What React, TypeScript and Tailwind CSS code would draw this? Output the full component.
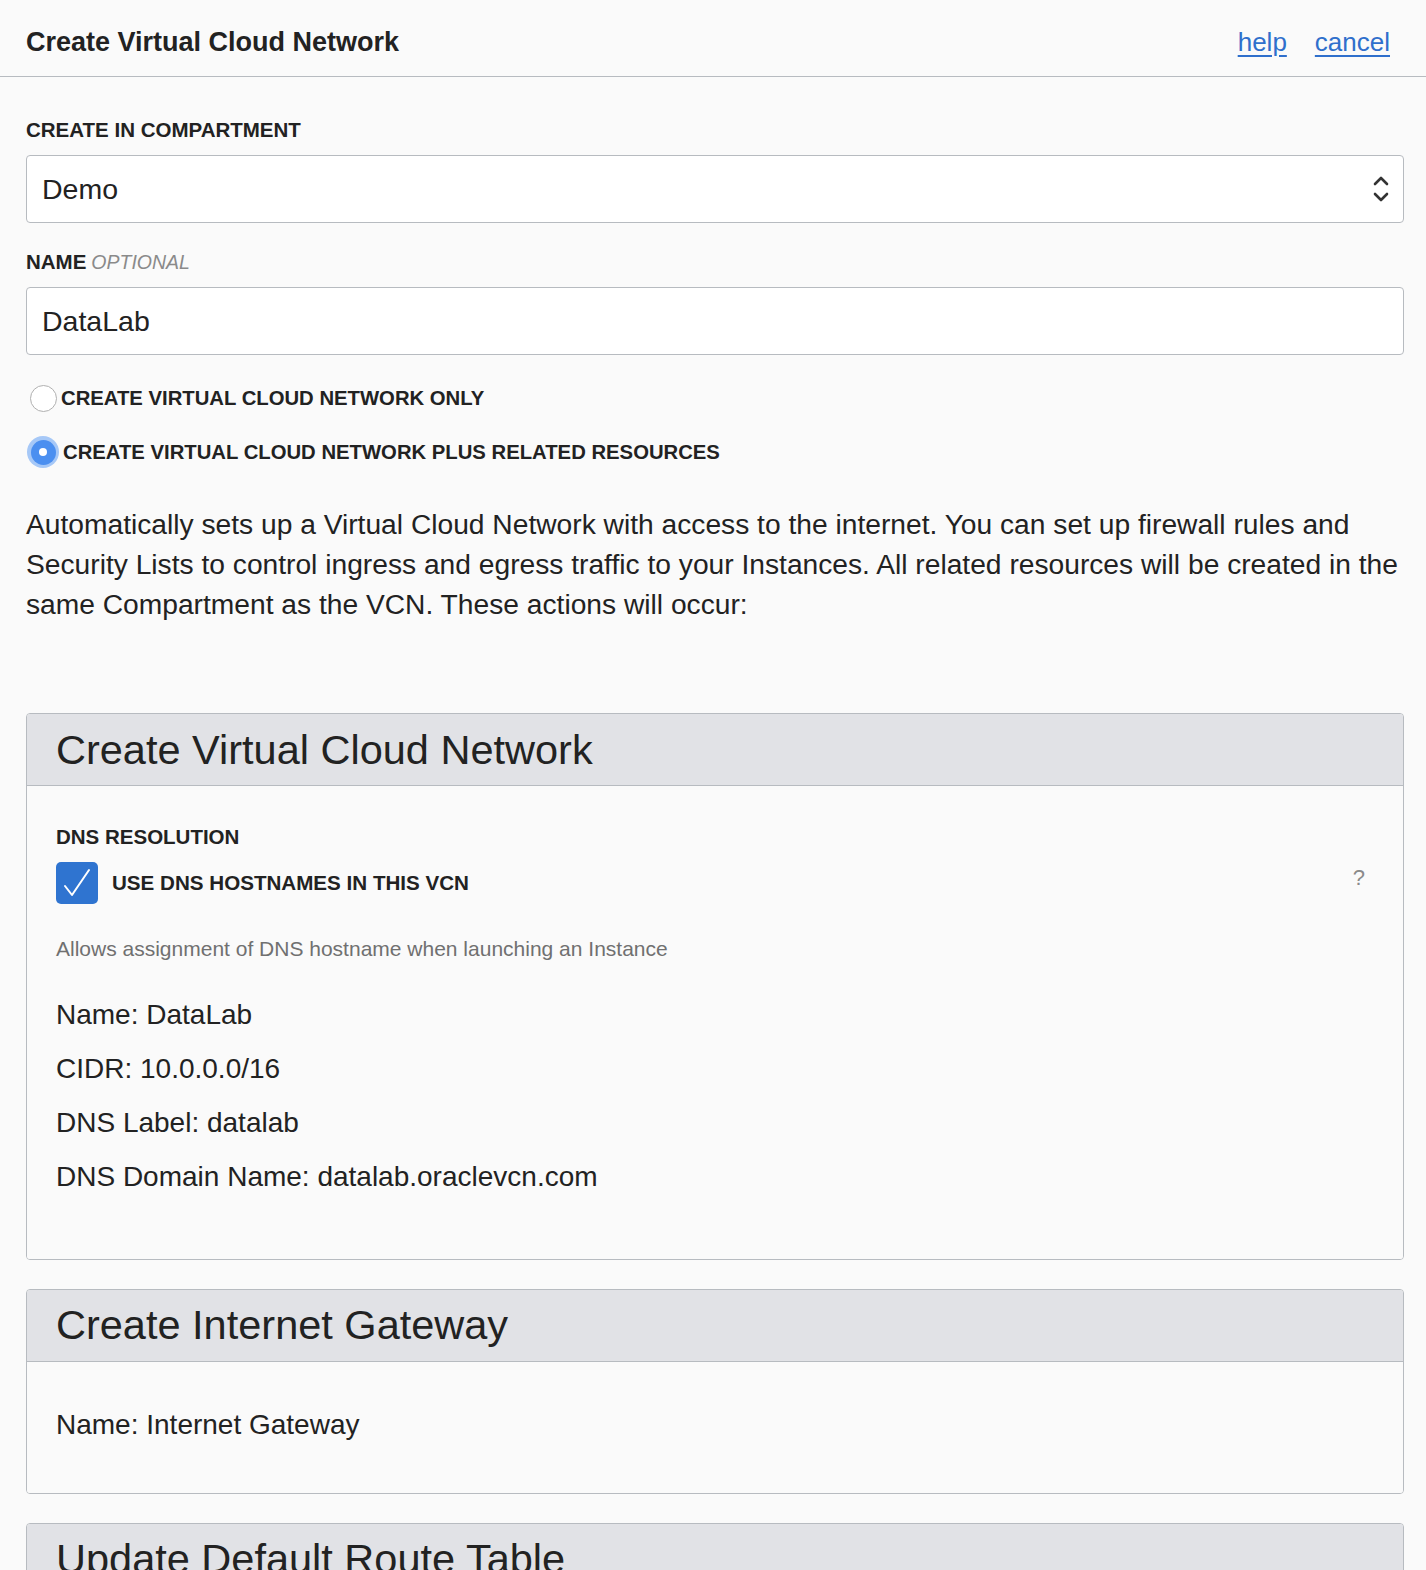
import React from "react";

const font = { fontFamily: '"Liberation Sans", Arial, sans-serif' };

function Card({ title, children }: { title: string; children: React.ReactNode }) {
  return (
    <div className="border border-[#b7bbc0] rounded-[4px] overflow-hidden">
      <div className="bg-[#e1e2e6] border-b border-[#b7bbc0] h-[72px] flex items-center px-[29px]">
        <h2 className="text-[41.5px] text-[#222] leading-none">{title}</h2>
      </div>
      <div className="bg-[#fafafa]">{children}</div>
    </div>
  );
}

export default function App() {
  return (
    <div style={font} className="bg-[#fafafa] text-[#222] min-h-[1570px] w-[1426px] overflow-hidden">
      <div className="h-[77px] border-b border-[#b7bbc0] flex items-center justify-between pl-[26px] pr-[36px] pt-[8px]">
        <h1 className="text-[27px] font-bold text-[#222]">Create Virtual Cloud Network</h1>
        <div className="flex gap-[28px] text-[26px] text-[#2f6fcc]">
          <a className="underline underline-offset-[4px]" href="#">help</a>
          <a className="underline underline-offset-[4px]" href="#">cancel</a>
        </div>
      </div>

      <div className="pl-[26px] pr-[22px]">
        <div className="pt-[40px] text-[20.5px] font-bold text-[#222] leading-[26px]">CREATE IN COMPARTMENT</div>
        <div className="mt-[12px] h-[68px] border border-[#b7bbc0] rounded-[4px] bg-white flex items-center justify-between pl-[15px] pr-[14px]">
          <span className="text-[28.5px]">Demo</span>
          <svg width="16" height="30" viewBox="0 0 16 30" fill="none" stroke="#333" strokeWidth="2.6" strokeLinecap="round" strokeLinejoin="round">
            <path d="M2 10 L8 4 L14 10" />
            <path d="M2 20 L8 26 L14 20" />
          </svg>
        </div>

        <div className="mt-[26px] h-[26px] flex items-baseline gap-[5px] leading-[26px]">
          <span className="font-bold text-[20.5px]">NAME</span>
          <span className="italic text-[#8a8a8a] text-[19.5px]">OPTIONAL</span>
        </div>
        <div className="mt-[12px] h-[68px] border border-[#b7bbc0] rounded-[4px] bg-white flex items-center pl-[15px]">
          <span className="text-[28.5px]">DataLab</span>
        </div>

        <div className="mt-[28px] flex items-center h-[30px] gap-[4px] pl-[4px]">
          <span className="w-[27px] h-[27px] rounded-full border border-[#b0b0b0] bg-white" />
          <span className="text-[20.3px] font-bold">CREATE VIRTUAL CLOUD NETWORK ONLY</span>
        </div>
        <div className="mt-[24px] flex items-center h-[30px] gap-[4px] pl-[1px]">
          <span className="w-[32px] h-[32px] rounded-full bg-[#a6c8f7] flex items-center justify-center">
            <span className="w-[25px] h-[25px] rounded-full bg-[#4b8ff0] flex items-center justify-center">
              <span className="w-[8px] h-[8px] rounded-full bg-white" />
            </span>
          </span>
          <span className="text-[20.3px] font-bold">CREATE VIRTUAL CLOUD NETWORK PLUS RELATED RESOURCES</span>
        </div>

        <p className="mt-[37px] text-[28.2px] leading-[40px] text-[#222] whitespace-nowrap">
          <span className="block">Automatically sets up a Virtual Cloud Network with access to the internet. You can set up firewall rules and</span>
          <span className="block">Security Lists to control ingress and egress traffic to your Instances. All related resources will be created in the</span>
          <span className="block">same Compartment as the VCN. These actions will occur:</span>
        </p>

        <div className="mt-[89px] flex flex-col gap-[29px]">
          <Card title="Create Virtual Cloud Network">
            <div className="px-[29px] pt-[38px] pb-[66px] relative">
              <div className="text-[20.5px] font-bold leading-[26px]">DNS RESOLUTION</div>
              <div className="mt-[12px] flex items-center gap-[14px]">
                <span className="w-[42px] h-[42px] rounded-[5px] bg-[#2f74d0] flex items-center justify-center">
                  <svg width="34" height="34" viewBox="0 0 34 34" fill="none" stroke="white" strokeWidth="2" strokeLinecap="round" strokeLinejoin="round">
                    <path d="M5 20 L12 29 L29 4" />
                  </svg>
                </span>
                <span className="text-[20.6px] font-bold">USE DNS HOSTNAMES IN THIS VCN</span>
                <span className="ml-auto mr-[9px] -mt-[12px] text-[22px] text-[#8a8a8a]">?</span>
              </div>
              <div className="mt-[29px] text-[21px] text-[#707070]">Allows assignment of DNS hostname when launching an Instance</div>
              <div className="mt-[34px] flex flex-col gap-[22px] text-[28px] leading-[32px]">
                <div>Name: DataLab</div>
                <div>CIDR: 10.0.0.0/16</div>
                <div>DNS Label: datalab</div>
                <div>DNS Domain Name: datalab.oraclevcn.com</div>
              </div>
            </div>
          </Card>
          <Card title="Create Internet Gateway">
            <div className="px-[29px] pt-[47px] pb-[52px] text-[28px] leading-[32px]">Name: Internet Gateway</div>
          </Card>
          <Card title="Update Default Route Table">
            <div className="h-[200px]" />
          </Card>
        </div>
      </div>
    </div>
  );
}
